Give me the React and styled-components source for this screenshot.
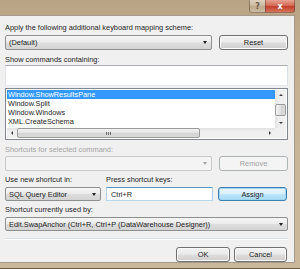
import React from "react";
import styled, { createGlobalStyle, css } from "styled-components";

const FS = "7.4px";

const Global = createGlobalStyle`
  html, body { margin: 0; padding: 0; background: #c2ad8f; }
  body { font-family: "Liberation Sans", Arial, sans-serif; color: #1e1e1e; }
  * { box-sizing: border-box; }
`;

const Frame = styled.div`
  width: 300px;
  height: 269px;
  display: flex;
  flex-direction: column;
  padding: 0 5px 5px 0;
  background: linear-gradient(180deg, #b9a385 0%, #c6b293 30%, #cbb89b 100%);
  border-bottom: 1px solid #6b5a45;
  overflow: hidden;
`;

const TitleBar = styled.div`
  height: 15px;
  display: flex;
  justify-content: flex-end;
  align-items: flex-start;
`;

const CaptionButton = styled.div`
  height: 13px;
  display: flex;
  align-items: center;
  justify-content: center;
  font-family: "DejaVu Sans", sans-serif;
  font-weight: bold;
  font-size: 8px;
  border: 1px solid rgba(90, 70, 50, 0.55);
  border-top: none;
  ${(p) =>
    p.$close
      ? css`
          width: 30px;
          color: #fff;
          border-radius: 0 0 3px 0;
          background: linear-gradient(180deg, #e7a292 0%, #d46a57 45%, #c2402c 55%, #d7735c 100%);
        `
      : css`
          width: 16px;
          color: #6d5c48;
          border-right: none;
          border-radius: 0 0 0 3px;
          background: linear-gradient(180deg, #ddd0bd 0%, #c9b89e 50%, #bda98c 55%, #cdbda4 100%);
        `}
`;

const Client = styled.div`
  flex: 1;
  background: #f0f0f0;
  border-top: 1px solid #a59a8c;
  border-right: 1px solid #a59a8c;
  border-bottom: 1px solid #a59a8c;
  padding: 7px 6px 0 5px;
  display: flex;
  flex-direction: column;
`;

const Label = styled.div`
  height: 10px;
  line-height: 10px;
  font-size: ${FS};
  white-space: nowrap;
  color: ${(p) => (p.$disabled ? "#a3a3a3" : "#1e1e1e")};
  margin-top: ${(p) => p.$mt || 0}px;
`;

const Row = styled.div`
  display: flex;
  align-items: stretch;
  gap: ${(p) => p.$gap || 7}px;
  margin-top: ${(p) => p.$mt || 0}px;
  height: ${(p) => p.$h || 15}px;
`;

const Col = styled.div`
  display: flex;
  flex-direction: column;
  width: ${(p) => p.$w}px;
`;

const Combo = styled.div`
  width: ${(p) => (p.$w ? `${p.$w}px` : "auto")};
  flex: ${(p) => (p.$w ? "none" : 1)};
  height: 100%;
  display: flex;
  align-items: center;
  padding: 0 4px 0 3px;
  font-size: ${FS};
  white-space: nowrap;
  overflow: hidden;
  border-radius: 2px;
  ${(p) =>
    p.$disabled
      ? css`
          border: 1px solid #c9c9c9;
          background: #f4f4f4;
          color: #a0a0a0;
        `
      : css`
          border: 1px solid #8e8f8f;
          background: linear-gradient(180deg, #f6f6f6 0%, #ebebeb 48%, #dddddd 52%, #d4d4d4 100%);
          color: #1e1e1e;
        `}
`;

const ComboText = styled.span`
  flex: 1;
  overflow: hidden;
`;

const Arrow = styled.span`
  width: 0;
  height: 0;
  margin-left: 3px;
  border-left: 2.5px solid transparent;
  border-right: 2.5px solid transparent;
  border-top: 3px solid ${(p) => (p.$disabled ? "#a8a8a8" : "#1e1e1e")};
`;

const Button = styled.div`
  width: ${(p) => p.$w}px;
  height: 100%;
  display: flex;
  align-items: center;
  justify-content: center;
  font-size: ${FS};
  border-radius: 3px;
  ${(p) =>
    p.$disabled
      ? css`
          border: 1px solid #adb2b5;
          background: #f4f4f4;
          color: #a0a0a0;
        `
      : p.$focused
      ? css`
          border: 1px solid #3c7fb1;
          box-shadow: inset 0 0 0 1px #9fd6f2;
          background: linear-gradient(180deg, #eaf6fd 0%, #d9f0fc 48%, #bee6fd 52%, #a7d9f5 100%);
          color: #1e1e1e;
        `
      : css`
          border: 1px solid #707070;
          box-shadow: inset 0 0 0 1px #fbfbfb;
          background: linear-gradient(180deg, #f2f2f2 0%, #ebebeb 48%, #dddddd 52%, #cfcfcf 100%);
          color: #1e1e1e;
        `}
`;

const TextBox = styled.div`
  width: ${(p) => (p.$w ? `${p.$w}px` : "auto")};
  flex: ${(p) => (p.$w ? "none" : 1)};
  height: ${(p) => p.$h || 14}px;
  background: #fff;
  display: flex;
  align-items: center;
  padding-left: 4px;
  font-size: ${FS};
  ${(p) =>
    p.$focused
      ? css`
          border: 1px solid #3d7bad;
          border-top-color: #5794bf;
          border-bottom-color: #b7d9ed;
          border-left-color: #b5cfe7;
          border-right-color: #b5cfe7;
        `
      : css`
          border: 1px solid #abadb3;
          border-left-color: #e2e3ea;
          border-right-color: #dbdfe6;
          border-bottom-color: #e3e9ef;
        `}
`;

const ListBox = styled.div`
  margin-top: 2px;
  height: 52px;
  border: 1px solid #828790;
  background: #fff;
  display: grid;
  grid-template-columns: 1fr 11px;
  grid-template-rows: 1fr 10px;
  padding: 1px;
`;

const Items = styled.div`
  display: flex;
  flex-direction: column;
  overflow: hidden;
`;

const Item = styled.div`
  height: 9px;
  line-height: 9px;
  font-size: 7.3px;
  padding-left: 1px;
  white-space: nowrap;
  ${(p) =>
    p.$selected &&
    css`
      background: #3399ff;
      color: #fff;
    `}
`;

const VScroll = styled.div`
  display: flex;
  flex-direction: column;
  background: linear-gradient(90deg, #e3e3e3, #f0f0f0 40%, #f0f0f0);
`;

const HScroll = styled.div`
  display: flex;
  align-items: stretch;
  background: linear-gradient(180deg, #e3e3e3, #f0f0f0 40%, #f0f0f0);
`;

const Corner = styled.div`
  background: #f0f0f0;
`;

const ScrollArrow = styled.div`
  width: ${(p) => (p.$h ? "10px" : "100%")};
  height: ${(p) => (p.$h ? "100%" : "10px")};
  display: flex;
  align-items: center;
  justify-content: center;
`;

const Tri = styled.span`
  width: 0;
  height: 0;
  ${(p) =>
    p.$dir === "up"
      ? css`
          border-left: 2px solid transparent;
          border-right: 2px solid transparent;
          border-bottom: 2px solid #3c3c3c;
        `
      : p.$dir === "down"
      ? css`
          border-left: 2px solid transparent;
          border-right: 2px solid transparent;
          border-top: 2px solid #3c3c3c;
        `
      : p.$dir === "left"
      ? css`
          border-top: 2px solid transparent;
          border-bottom: 2px solid transparent;
          border-right: 2px solid #3c3c3c;
        `
      : css`
          border-top: 2px solid transparent;
          border-bottom: 2px solid transparent;
          border-left: 2px solid #3c3c3c;
        `}
`;

const Spacer = styled.div`
  flex: ${(p) => p.$flex || 1};
`;

const Thumb = styled.div`
  border: 1px solid #9b9b9b;
  border-radius: 2px;
  display: flex;
  align-items: center;
  justify-content: center;
  ${(p) =>
    p.$h
      ? css`
          width: ${p.$size}px;
          background: linear-gradient(180deg, #f3f3f3, #e2e2e2 50%, #d3d3d3 51%, #dcdcdc);
        `
      : css`
          height: ${p.$size}px;
          background: linear-gradient(90deg, #f3f3f3, #e2e2e2 50%, #d3d3d3 51%, #dcdcdc);
        `}
`;

const Grip = styled.span`
  width: 5px;
  height: 3px;
  background: repeating-linear-gradient(90deg, #6f6f6f 0 1px, transparent 1px 2px);
`;

const Separator = styled.div`
  margin-top: 7px;
  height: 2px;
  border-top: 1px solid #d5dfe5;
  border-bottom: 1px solid #ffffff;
`;

const Footer = styled.div`
  display: flex;
  justify-content: flex-end;
  gap: 4px;
  margin-top: 7px;
  height: 15px;
  padding-right: 1px;
`;

export default function App() {
  return (
    <>
      <Global />
      <Frame>
        <TitleBar>
          <CaptionButton>?</CaptionButton>
          <CaptionButton $close>x</CaptionButton>
        </TitleBar>
        <Client>
          <Label>Apply the following additional keyboard mapping scheme:</Label>
          <Row $mt={2}>
            <Combo $w={207}>
              <ComboText>(Default)</ComboText>
              <Arrow />
            </Combo>
            <Button $w={69}>Reset</Button>
          </Row>
          <Label $mt={5}>Show commands containing:</Label>
          <TextBox $h={14} />
          <ListBox>
            <Items>
              <Item $selected>Window.ShowResultsPane</Item>
              <Item>Window.Split</Item>
              <Item>Window.Windows</Item>
              <Item>XML.CreateSchema</Item>
            </Items>
            <VScroll>
              <ScrollArrow><Tri $dir="up" /></ScrollArrow>
              <Spacer $flex={1} />
              <Thumb $size={12} />
              <Spacer $flex={0.45} />
              <ScrollArrow><Tri $dir="down" /></ScrollArrow>
            </VScroll>
            <HScroll>
              <ScrollArrow $h><Tri $dir="left" /></ScrollArrow>
              <Thumb $h $size={183}><Grip /></Thumb>
              <Spacer />
              <ScrollArrow $h><Tri $dir="right" /></ScrollArrow>
            </HScroll>
            <Corner />
          </ListBox>
          <Label $mt={5} $disabled>Shortcuts for selected command:</Label>
          <Row $mt={1}>
            <Combo $w={207} $disabled>
              <ComboText />
              <Arrow $disabled />
            </Combo>
            <Button $w={69} $disabled>Remove</Button>
          </Row>
          <Row $mt={4} $h={10} $gap={5}>
            <Col $w={96}><Label>Use new shortcut in:</Label></Col>
            <Col $w={110}><Label>Press shortcut keys:</Label></Col>
          </Row>
          <Row $mt={2} $h={14} $gap={5}>
            <Combo $w={96}>
              <ComboText>SQL Query Editor</ComboText>
              <Arrow />
            </Combo>
            <TextBox $w={107} $focused>Ctrl+R</TextBox>
            <Button $w={69} $focused>Assign</Button>
          </Row>
          <Label $mt={4}>Shortcut currently used by:</Label>
          <Row $mt={2} $h={14}>
            <Combo>
              <ComboText>Edit.SwapAnchor (Ctrl+R, Ctrl+P (DataWarehouse Designer))</ComboText>
              <Arrow />
            </Combo>
          </Row>
          <Separator />
          <Footer>
            <Button $w={54}>OK</Button>
            <Button $w={53}>Cancel</Button>
          </Footer>
        </Client>
      </Frame>
    </>
  );
}
